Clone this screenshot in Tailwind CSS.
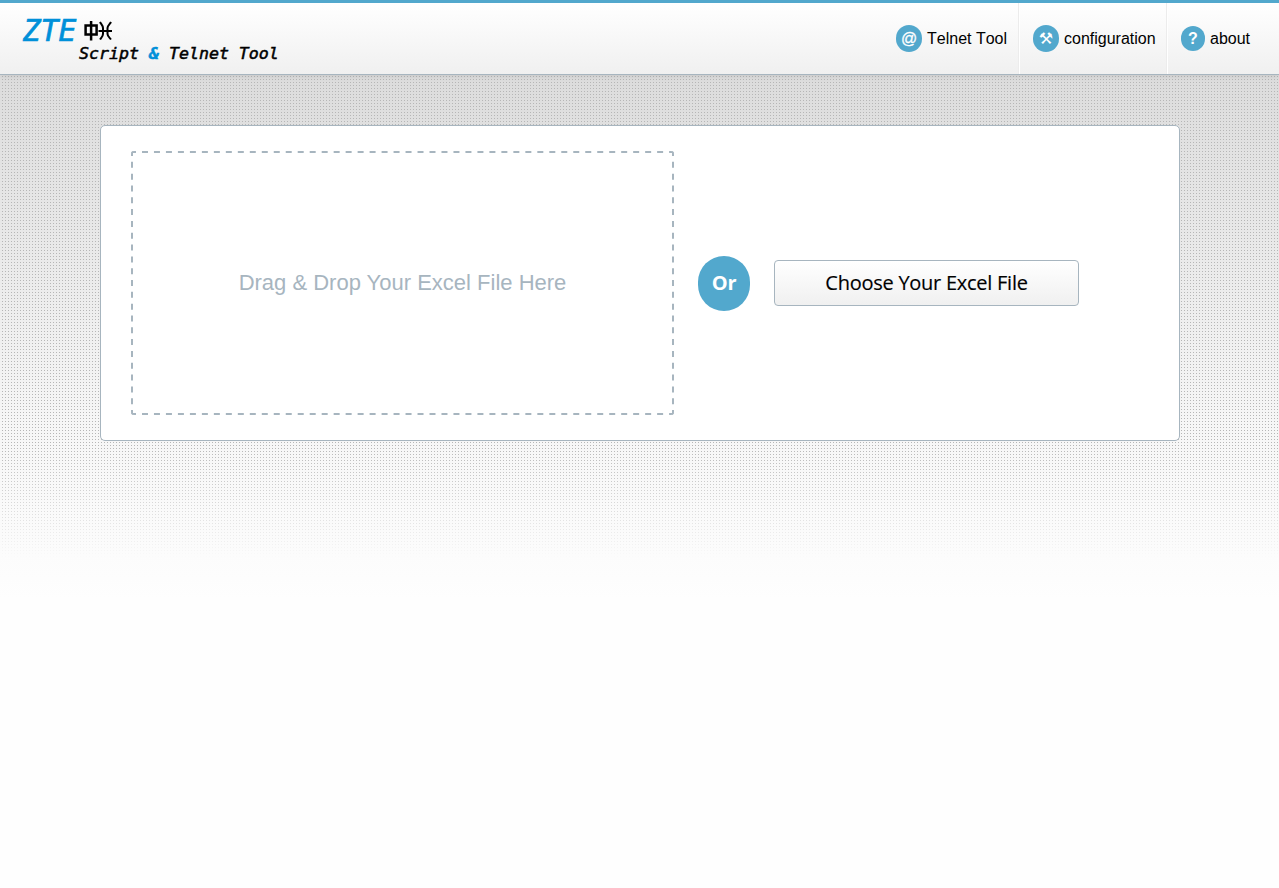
<!DOCTYPE html>
<html lang="en">
<head>
<meta charset="utf-8">
<title>ZTE Script &amp; Telnet Tool</title>
<script src="https://cdn.jsdelivr.net/npm/@tailwindcss/browser@4"></script>
</head>
<body class="h-[888px] overflow-hidden bg-white font-['Liberation_Sans',sans-serif] text-black">
<div class="relative h-full bg-[linear-gradient(#dcdcdc_75px,#e0e0e0_125px,#f6f6f6_420px,#fefefe_600px)]">
  <div class="absolute inset-x-0 top-[75px] h-[500px] bg-[linear-gradient(90deg,transparent_2px,#b6b6b6_2px)] [background-size:3px_3px] [mask-image:linear-gradient(#000_370px,transparent_485px),linear-gradient(transparent_1px,#000_1px,#000_2px,transparent_2px)] [mask-size:100%_100%,3px_3px] [mask-composite:intersect]"></div>
  <div class="relative">
    <header class="flex h-[75px] justify-between border-t-3 border-b border-t-[#52a8cd] border-b-[#a7b5bf] bg-linear-to-b from-white to-[#f0f0f0] shadow-[0_1px_5px_rgba(0,0,0,0.1)]">
      <div class="pl-[23px] pt-[13px] font-['DejaVu_Sans_Mono',monospace] italic">
        <div class="flex h-[30px] items-center">
          <span class="w-[54px] text-[29.500px] leading-[30px] text-[#0090d9] [-webkit-text-stroke:0.7px_#0090d9]">ZTE</span>
          <svg class="ml-[7px]" width="29" height="20" viewBox="0 0 29 20" fill="none" stroke="#000"><path stroke-width="2.500" d="M1.600 4.500H12.600V13.500H1.600ZM7.100 0V19.500"/><path stroke-width="2" d="M14.500 10H28M16 1c1 2 3 3.500 3 6V13c0 2.500-2 4-3 5.500M27 1c-1 2-3.500 3.500-3.500 6V13c0 2.500 2.500 4 3.500 5.500"/></svg>
        </div>
        <div class="pl-[56px] text-[16.600px] leading-[16px] whitespace-nowrap [-webkit-text-stroke:0.500px_currentColor]">Script <span class="font-bold text-[#0090d9]">&amp;</span> Telnet Tool</div>
      </div>
      <nav class="flex text-base [font-kerning:none]">
        <a class="flex w-[137px] items-center border-r border-[#ececec] pl-[14px] whitespace-nowrap"><span class="mr-[5px] flex h-[27px] w-[26px] items-center justify-center rounded-full bg-[#52a8cd] text-white [-webkit-text-stroke:0.3px_white]">@</span>Telnet Tool</a>
        <a class="flex w-[148px] items-center border-r border-l border-r-[#ececec] border-l-white pl-[13px]"><span class="mr-[5px] flex h-[27px] w-[26px] items-center justify-center rounded-full bg-[#52a8cd] font-['DejaVu_Sans',sans-serif] font-bold text-white">⚒</span>configuration</a>
        <a class="flex w-[112px] items-center border-l border-white pl-[13px]"><span class="mr-[5px] flex h-[25px] w-[24px] items-center justify-center rounded-full bg-[#52a8cd] font-bold text-white">?</span>about</a>
      </nav>
    </header>
    <main class="mx-[100px] mt-[50px] flex h-[316px] w-[1080px] items-center rounded-[5px] border border-[#a7b5bf] bg-white pl-[30px]">
      <div class="relative flex h-[264px] w-[543px] items-center justify-center overflow-hidden rounded-[3px] pb-[2px] text-[22px] text-[#a7b5bf]">
        <svg class="absolute inset-0" width="543" height="264" fill="none" stroke="#a7b5bf" stroke-width="2">
          <path d="M0 1H543M0 263H543" stroke-dasharray="6 5.980" stroke-dashoffset="1"/>
          <path d="M1 0V264M542 0V264" stroke-dasharray="6 5.820" stroke-dashoffset="1"/>
        </svg>
        Drag &amp; Drop Your Excel File Here
      </div>
      <div class="ml-[24px] flex h-[55px] w-[52px] items-center justify-center rounded-full bg-[#52a8cd] font-['Open_Sans',sans-serif] text-xl font-bold tracking-[-0.200px] text-white">Or</div>
      <button class="ml-[24px] h-[46px] w-[305px] rounded-[4px] border border-[#a7b5bf] bg-linear-to-b from-white to-[#f0f0f0] font-['Open_Sans',sans-serif] text-xl tracking-[-0.260px] [-webkit-text-stroke:0.150px_black]">Choose Your Excel File</button>
    </main>
  </div>
</div>
</body>
</html>
